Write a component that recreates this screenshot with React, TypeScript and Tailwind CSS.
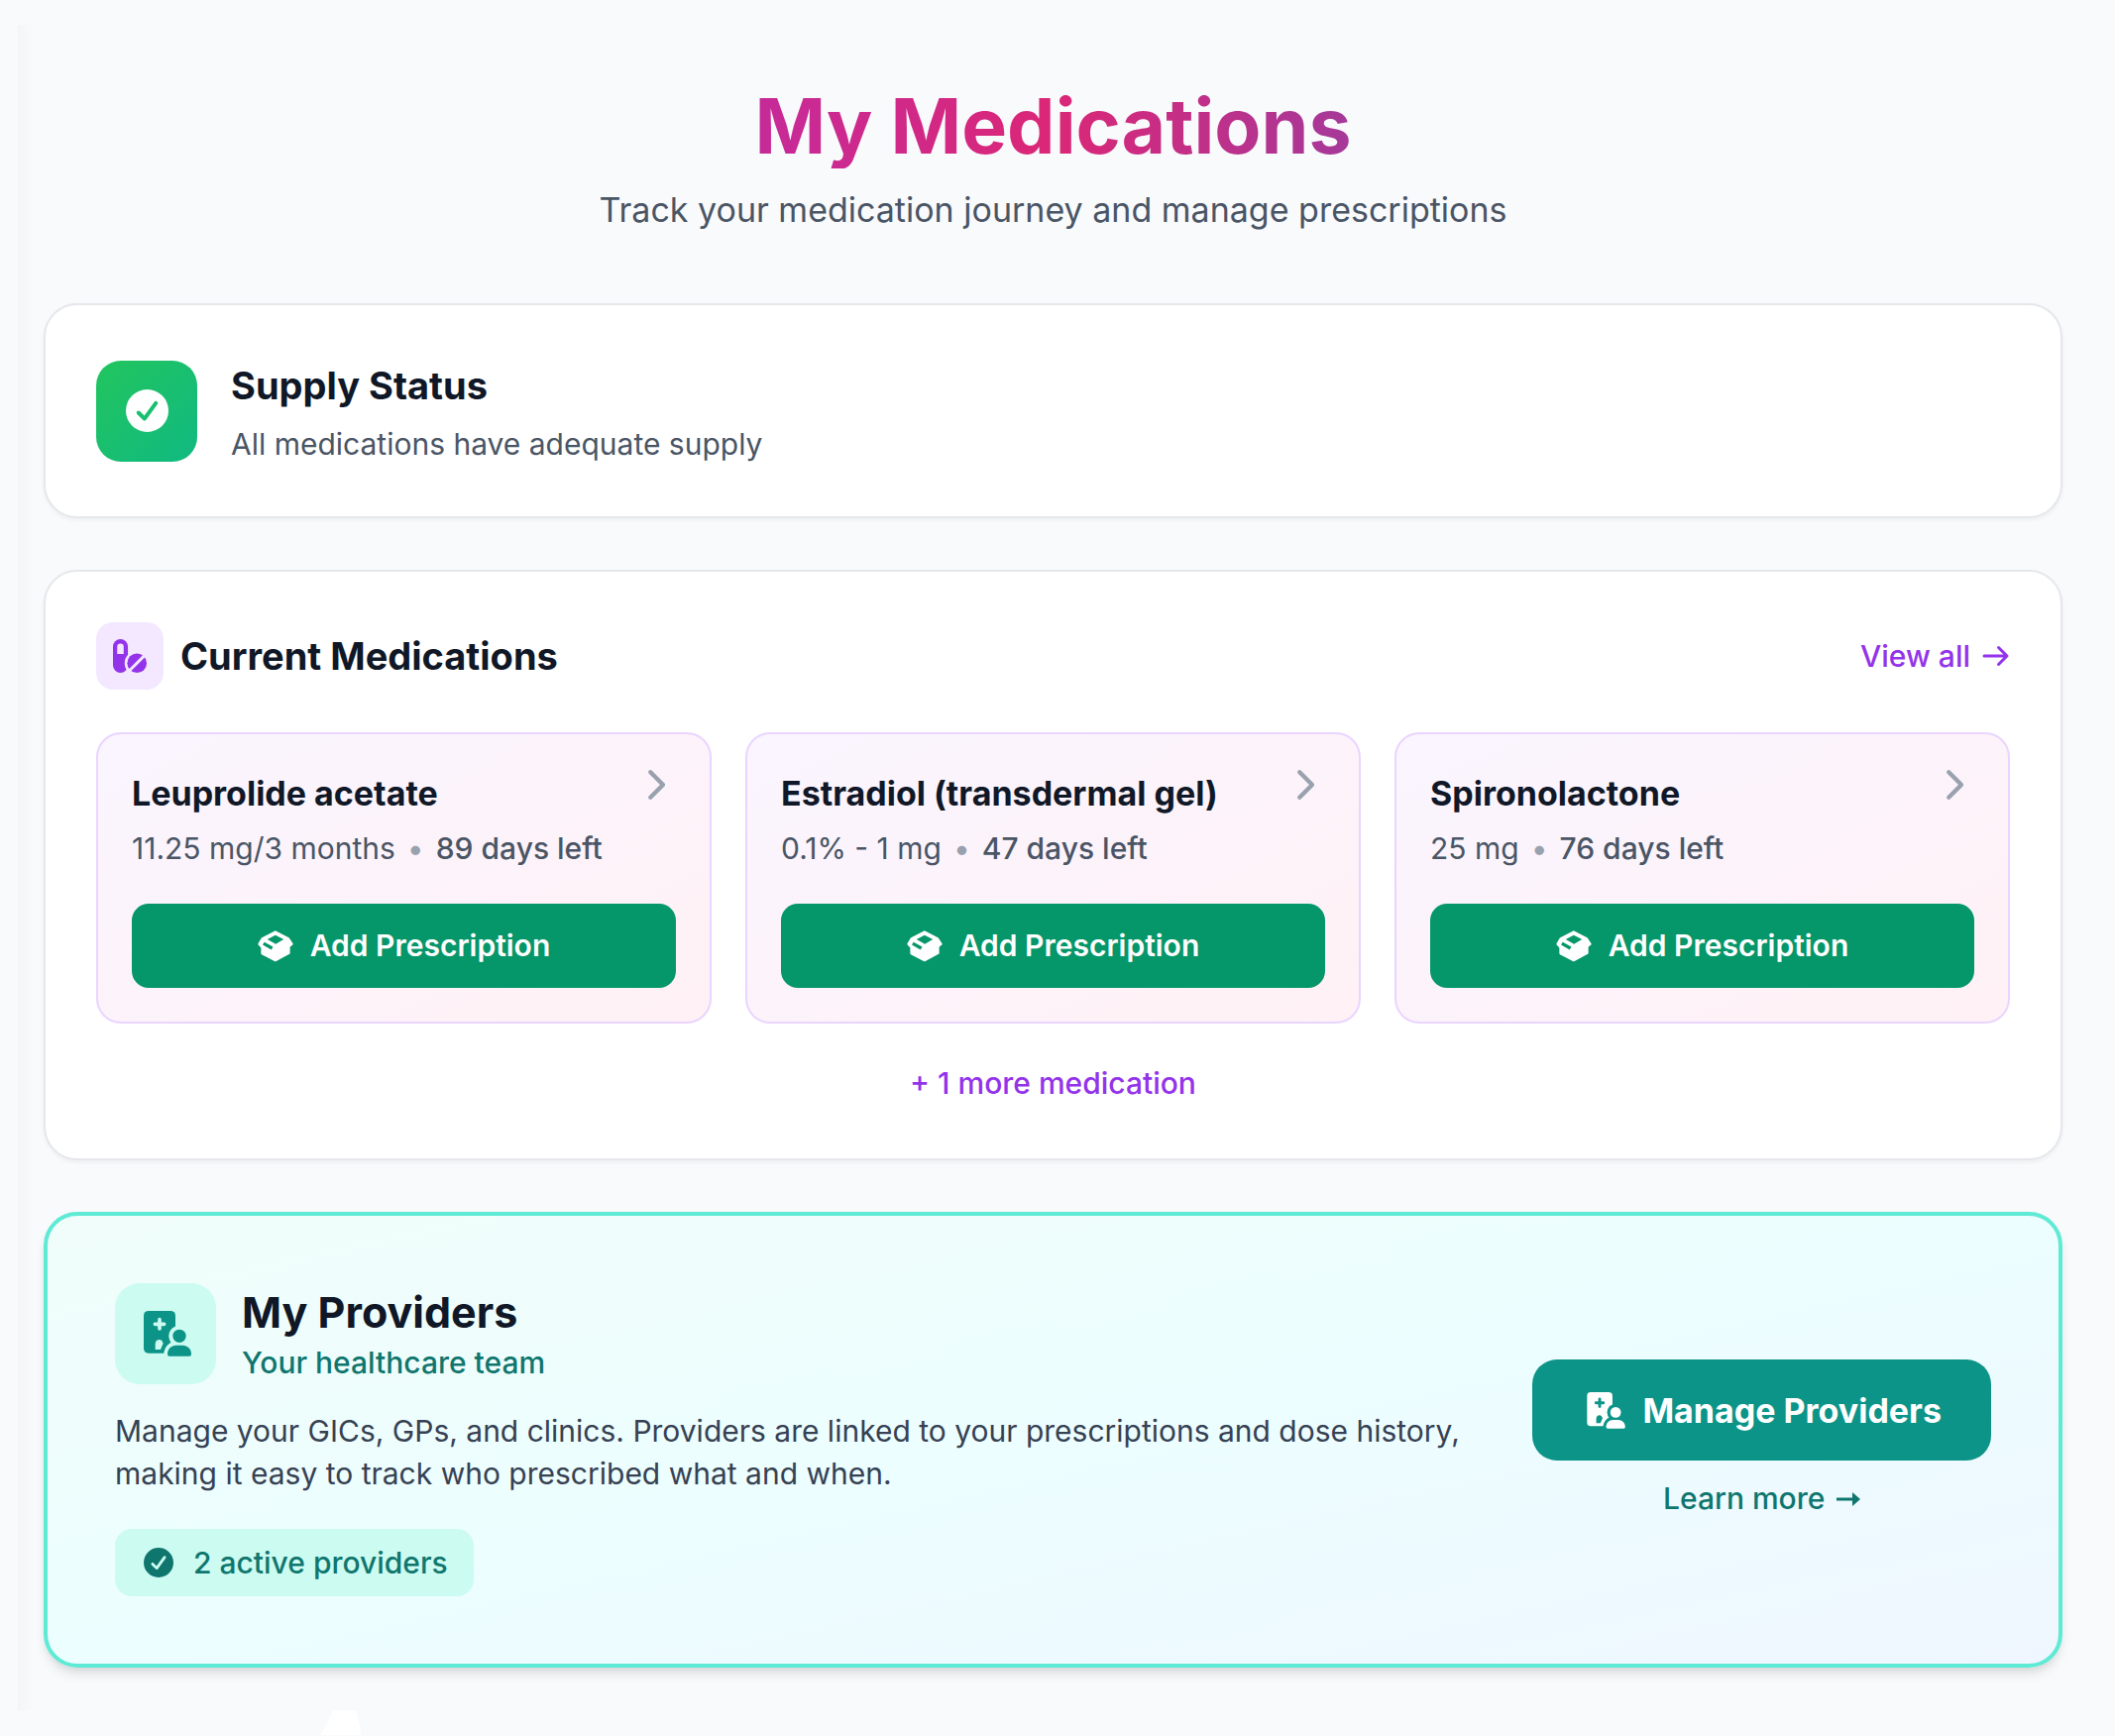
import React from 'react'
import { FaChevronRight } from 'react-icons/fa6'

interface Medication {
  name: string
  dose: string
  daysLeft: number
}

interface IconProps {
  className?: string
}

const medications: Medication[] = [
  { name: 'Leuprolide acetate', dose: '11.25 mg/3 months', daysLeft: 89 },
  { name: 'Estradiol (transdermal gel)', dose: '0.1% - 1 mg', daysLeft: 47 },
  { name: 'Spironolactone', dose: '25 mg', daysLeft: 76 },
]

const CheckCircleIcon: React.FC<IconProps> = ({ className }) => (
  <svg
    viewBox="0 0 512 512"
    fill="currentColor"
    className={className}
    aria-hidden="true"
  >
    <path d="M256 512a256 256 0 1 1 0-512 256 256 0 1 1 0 512zM374 145.700c-10.700-7.800-25.700-5.400-33.500 5.300L221.100 315.200 169 263.100c-9.400-9.400-24.600-9.400-33.900 0s-9.400 24.600 0 33.900l72 72c5 5 11.900 7.500 18.800 7s13.400-4.100 17.500-9.800L379.300 179.200c7.800-10.700 5.400-25.700-5.300-33.500z" />
  </svg>
)

const PillsIcon: React.FC<IconProps> = ({ className }) => (
  <svg viewBox="0 0 104 104" className={className} aria-hidden="true">
    <mask id="capsule-cut">
      <rect width="104" height="104" fill="white" />
      <path d="M13 46 V24 a10 10 0 0 1 20 0 V46 Z" fill="black" />
      <circle cx="74" cy="74" r="38" fill="black" />
    </mask>
    <mask id="tablet-cut">
      <rect width="104" height="104" fill="white" />
      <path d="M44 104 L104 44" stroke="black" strokeWidth="9" />
    </mask>
    <rect
      width="46"
      height="104"
      rx="23"
      fill="currentColor"
      mask="url(#capsule-cut)"
    />
    <circle
      cx="74"
      cy="74"
      r="30"
      fill="currentColor"
      mask="url(#tablet-cut)"
    />
  </svg>
)

const BoxIcon: React.FC<IconProps> = ({ className }) => (
  <svg viewBox="46 41 107 95" className={className} aria-hidden="true">
    <path
      d="M99 45 L138 65 L149 82 L140 89 V109 L99 131 L59 110 V92 L50 82 L60 65 Z"
      fill="currentColor"
      stroke="currentColor"
      strokeWidth="6"
      strokeLinejoin="round"
    />
    <path
      d="M99 55 L124 68 L100 82 L75 68 Z M66 76 L92 90 L87 99 L61 84 Z"
      className="fill-[#059669]"
    />
  </svg>
)

const HospitalUserIcon: React.FC<IconProps & { id: string }> = ({
  className,
  id,
}) => (
  <svg viewBox="0 0 144 138" className={className} aria-hidden="true">
    <mask id={id}>
      <rect width="144" height="138" fill="white" />
      <path
        d="M48 26 V54 M34 40 H62"
        stroke="black"
        strokeWidth="11"
        strokeLinecap="round"
      />
      <path
        d="M35 117 V99 a12 12 0 0 1 20 -9 l4 8 l-8 19 Z"
        fill="black"
      />
      <circle cx="108" cy="76" r="32" fill="black" />
      <path d="M60 138 C60 108 78 92 98 92 H144 V138 Z" fill="black" />
    </mask>
    <rect
      width="96"
      height="128"
      rx="14"
      fill="currentColor"
      mask={`url(#${id})`}
    />
    <circle cx="108" cy="76" r="20" fill="currentColor" />
    <path
      d="M72 131 C72 115 84 104 98 104 H118 C132 104 144 115 144 131 Q144 137 138 137 H78 Q72 137 72 131 Z"
      fill="currentColor"
    />
  </svg>
)

const MedicationCard: React.FC<{ medication: Medication }> = ({
  medication,
}) => {
  return (
    <div className="rounded-[25px] border-2 border-[#e9d5ff] bg-linear-to-br/srgb from-[#faf5ff] to-[#fff1f5] p-[34px]">
      <div className="mb-[34px] flex items-start justify-between">
        <div>
          <h3 className="text-[34px] leading-[51px] font-bold text-gray-900">
            {medication.name}
          </h3>
          <div className="mt-[9px] flex items-center gap-3 text-[30px] leading-[43px] text-gray-600">
            <span>{medication.dose}</span>
            <span className="text-gray-400">•</span>
            <span className="font-medium">{medication.daysLeft} days left</span>
          </div>
        </div>
        <FaChevronRight className="h-[34px] w-[43px] text-gray-400" />
      </div>
      <button
        type="button"
        className="flex h-[85px] w-full items-center justify-center gap-[17px] rounded-[17px] bg-[#059669] text-[30px] font-semibold text-white"
      >
        <BoxIcon className="h-8 w-9" />
        Add Prescription
      </button>
    </div>
  )
}

const App: React.FC = () => {
  return (
    <div className="min-h-screen bg-[#f9fafc] pt-[25px] font-['Inter',sans-serif]">
      <main className="relative ml-[18px] pt-[60px] pr-[53px] pb-[43px] pl-[26px]">
        <div className="absolute inset-y-0 left-0 w-4 bg-linear-to-r/srgb from-black/2 to-transparent" />

        <header className="mb-[69px] text-center">
          <h1 className="bg-linear-to-r/srgb from-[#9333ea] via-[#db2777] to-[#2563eb] bg-clip-text text-[77px] leading-[85px] font-bold text-transparent">
            My Medications
          </h1>
          <p className="mt-[17px] text-[34px] leading-[50px] text-gray-600">
            Track your medication journey and manage prescriptions
          </p>
        </header>

        <div className="flex flex-col gap-[52px]">
          <section className="flex items-center gap-[34px] rounded-[34px] border-2 border-gray-200 bg-white p-[51px] shadow-[0_2px_4px_rgba(0,0,0,0.05)]">
            <div className="flex size-[102px] items-center justify-center rounded-[25px] bg-linear-to-br/srgb from-[#22c55e] to-[#10b981]">
              <CheckCircleIcon className="size-[43px] text-white" />
            </div>
            <div>
              <h2 className="text-[38px] leading-[60px] font-bold text-gray-900">
                Supply Status
              </h2>
              <p className="mt-2 text-[30px] leading-[43px] text-gray-600">
                All medications have adequate supply
              </p>
            </div>
          </section>

          <section className="rounded-[34px] border-2 border-gray-200 bg-white p-[51px] shadow-[0_2px_4px_rgba(0,0,0,0.05)]">
            <div className="mb-[43px] flex items-center justify-between">
              <div className="flex items-center gap-[17px]">
                <div className="flex size-[68px] items-center justify-center rounded-[17px] bg-[#f3e8ff]">
                  <PillsIcon className="size-[34px] text-[#9333ea]" />
                </div>
                <h2 className="text-[38px] leading-[60px] font-bold text-gray-900">
                  Current Medications
                </h2>
              </div>
              <a
                href="#medications"
                className="flex items-center gap-3 text-[30px] leading-[43px] font-medium text-[#9333ea]"
              >
                View all
                <svg
                  viewBox="0 0 28 22"
                  className="h-[22px] w-7"
                  fill="none"
                  stroke="currentColor"
                  strokeWidth="3"
                  strokeLinecap="round"
                  strokeLinejoin="round"
                  aria-hidden="true"
                >
                  <path d="M2 11 H25 M16.500 2.500 L25 11 L16.500 19.500" />
                </svg>
              </a>
            </div>

            <div className="grid grid-cols-3 gap-[34px]">
              {medications.map((medication) => (
                <MedicationCard key={medication.name} medication={medication} />
              ))}
            </div>

            <div className="mt-[34px] text-center text-[34px] leading-[49px]">
              <a
                href="#medications"
                className="text-[30px] font-medium text-[#9333ea]"
              >
                + 1 more medication
              </a>
            </div>
          </section>

          <section className="flex items-center gap-[51px] rounded-[34px] border-4 border-[#5eead4] bg-linear-to-br/srgb from-[#f0fdfa] via-[#ecfeff] to-[#eff6ff] p-[68px] shadow-[0_8px_12px_-2px_rgba(0,0,0,0.1),0_4px_8px_-4px_rgba(0,0,0,0.1)]">
            <div className="flex-1">
              <div className="flex items-center gap-[26px]">
                <div className="flex size-[102px] items-center justify-center rounded-[25px] bg-[#ccfbf1] pl-1">
                  <HospitalUserIcon
                    id="provider-tile"
                    className="h-[46px] w-12 text-[#0d9488]"
                  />
                </div>
                <div>
                  <h2 className="text-[43px] leading-[59px] font-bold text-gray-900">
                    My Providers
                  </h2>
                  <p className="text-[30px] leading-[43px] font-medium text-[#0f766e]">
                    Your healthcare team
                  </p>
                </div>
              </div>
              <p className="mt-[26px] text-[30px] leading-[43px] text-gray-700">
                Manage your GICs, GPs, and clinics. Providers are linked to your
                prescriptions and dose history, making it easy to track who
                prescribed what and when.
              </p>
              <div className="mt-[34px] inline-flex h-[68px] items-center gap-5 rounded-[17px] bg-[#ccfbf1] pr-[26px] pl-[29px] text-[30px] font-medium text-[#0f766e]">
                <CheckCircleIcon className="size-[30px]" />
                <span>2 active providers</span>
              </div>
            </div>

            <div className="flex flex-col items-center gap-[17px]">
              <button
                type="button"
                className="flex h-[102px] items-center gap-[17px] rounded-[25px] bg-[#0d9488] pr-[50px] pl-[55px] text-[34px] font-bold text-white"
              >
                <HospitalUserIcon
                  id="provider-button"
                  className="h-[37px] w-[39px]"
                />
                Manage Providers
              </button>
              <a
                href="#providers"
                className="flex items-center gap-3 text-[30px] leading-[43px] font-medium text-[#0f766e]"
              >
                Learn more
                <svg
                  viewBox="0 0 24 14"
                  className="h-[14px] w-6"
                  fill="currentColor"
                  aria-hidden="true"
                >
                  <path d="M0 5.400 H16 L16 0 L24 7 L16 14 V8.600 H0 Z" />
                </svg>
              </a>
            </div>
          </section>
        </div>
      </main>

      <footer className="pl-[324px]">
        <svg
          viewBox="0 0 41 25"
          className="h-[25px] w-[41px] fill-white"
          aria-hidden="true"
        >
          <path d="M12 0 H35 Q38 12 41 25 H0 Q5 15 12 0 Z" />
        </svg>
      </footer>
    </div>
  )
}

export default App
